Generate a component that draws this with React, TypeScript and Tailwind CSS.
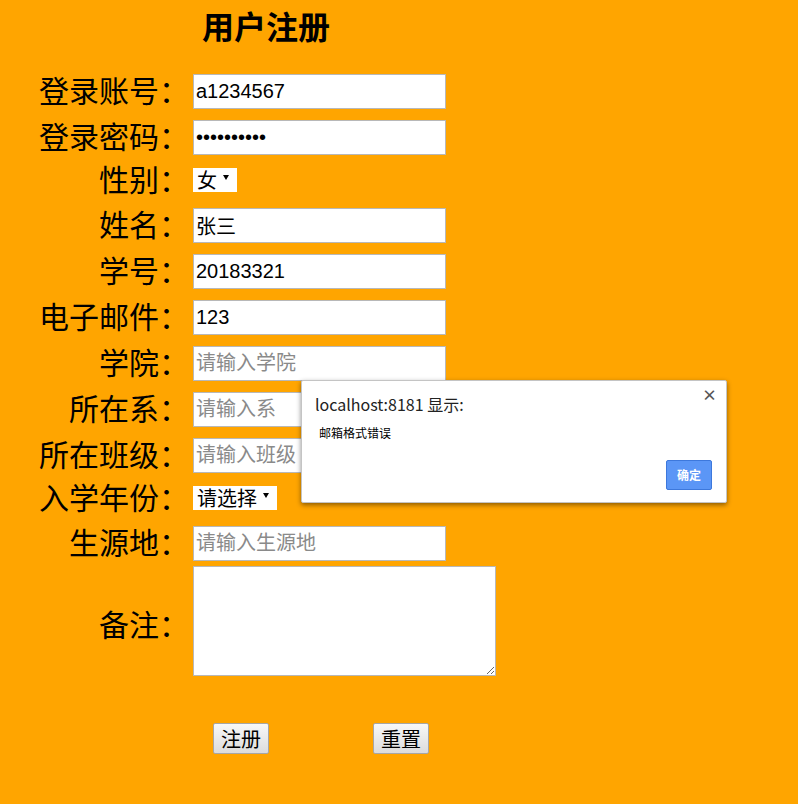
import React from "react";

const cjk = { fontFamily: '"Noto Sans CJK SC", "Noto Sans", sans-serif' };

type Row = {
  label: string;
  kind: "input" | "password" | "select";
  value?: string;
  placeholder?: string;
  selectText?: string;
};

const rows: Row[] = [
  { label: "登录账号：", kind: "input", value: "a1234567" },
  { label: "登录密码：", kind: "password", value: "1234567890" },
  { label: "性别：", kind: "select", selectText: "女" },
  { label: "姓名：", kind: "input", value: "张三" },
  { label: "学号：", kind: "input", value: "20183321" },
  { label: "电子邮件：", kind: "input", value: "123" },
  { label: "学院：", kind: "input", placeholder: "请输入学院" },
  { label: "所在系：", kind: "input", placeholder: "请输入系" },
  { label: "所在班级：", kind: "input", placeholder: "请输入班级" },
  { label: "入学年份：", kind: "select", selectText: "请选择" },
  { label: "生源地：", kind: "input", placeholder: "请输入生源地" },
];

function Label({ text }: { text: string }) {
  return (
    <div
      className="w-[189px] shrink-0 pb-[4px] text-right text-[30px] leading-[40px] text-black"
      style={cjk}
    >
      {text}
    </div>
  );
}

function FakeSelect({ text }: { text: string }) {
  return (
    <div className="ml-[4px] flex h-[24px] items-center bg-white pl-[4px] pr-[8px]">
      <span className="text-[20px] leading-[24px] text-black" style={cjk}>
        {text}
      </span>
      <svg width="6" height="5" viewBox="0 0 6 5" className="mb-[6px] ml-[6px]">
        <path d="M0 0 L6 0 L3 5 Z" fill="#000" />
      </svg>
    </div>
  );
}

export default function App() {
  return (
    <div className="relative min-h-[804px] w-full bg-[#ffa500]">
      <h1
        className="w-[532px] pt-[4px] text-center text-[32px] font-bold leading-[42px] text-black"
        style={cjk}
      >
        用户注册
      </h1>

      <div className="mt-[22px] flex flex-col">
        {rows.map((r) =>
          r.kind === "select" ? (
            <div key={r.label} className="flex h-[42px] items-center pb-[2px]">
              <Label text={r.label} />
              <FakeSelect text={r.selectText ?? ""} />
            </div>
          ) : (
            <div key={r.label} className="flex h-[46px] items-center">
              <Label text={r.label} />
              <input
                type={r.kind === "password" ? "password" : "text"}
                defaultValue={r.value}
                placeholder={r.placeholder}
                className="ml-[4px] h-[35px] w-[253px] border border-[#b8b8b8] bg-white pl-[2px] text-[20px] text-black outline-none placeholder:text-[#8a8a8a]"
                style={{ fontFamily: '"Liberation Sans", "Noto Sans CJK SC", sans-serif' }}
              />
            </div>
          )
        )}

        <div className="flex h-[110px] items-center">
          <div className="pt-[8px]">
            <Label text="备注：" />
          </div>
          <textarea className="ml-[4px] h-[110px] w-[303px] border border-[#b8b8b8] bg-white outline-none" />
        </div>
      </div>

      <div className="mt-[47px] flex pl-[213px]">
        <button
          className="flex h-[31px] w-[56px] items-center justify-center rounded-[2px] border border-[#a6a6a6] bg-gradient-to-b from-[#f8f8f8] to-[#dcdcdc] text-[20px] text-black"
          style={cjk}
        >
          注册
        </button>
        <button
          className="ml-[104px] flex h-[31px] w-[56px] items-center justify-center rounded-[2px] border border-[#a6a6a6] bg-gradient-to-b from-[#f8f8f8] to-[#dcdcdc] text-[20px] text-black"
          style={cjk}
        >
          重置
        </button>
      </div>

      {/* alert dialog */}
      <div className="absolute left-[301px] top-[380px] flex h-[123px] w-[426px] flex-col rounded-[2px] border border-[#c4c4c4] bg-white shadow-[0_2px_5px_rgba(0,0,0,0.45)]">
        <span
          className="absolute right-[9px] top-[5px] text-[15px] font-bold leading-[18px] text-[#555]"
          style={cjk}
        >
          ×
        </span>
        <div className="ml-[13px] mt-[12px] text-[16px] leading-[22px] text-[#222]" style={cjk}>
          localhost:8181 显示:
        </div>
        <div className="ml-[17px] mt-[10px] text-[12px] leading-[16px] text-black" style={cjk}>
          邮箱格式错误
        </div>
        <div className="mr-[14px] mt-[19px] flex justify-end">
          <button
            className="flex h-[30px] w-[46px] items-center justify-center rounded-[2px] border border-[#3d78dc] bg-[#5b96f6] text-[12px] font-bold text-white"
            style={cjk}
          >
            确定
          </button>
        </div>
      </div>
    </div>
  );
}
